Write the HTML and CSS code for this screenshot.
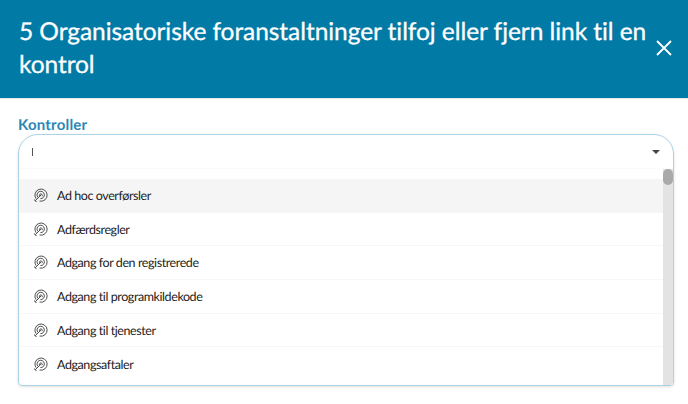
FILE: index.html
```html
<!DOCTYPE html>
<html lang="en">
<head>
    <meta charset="UTF-8">
    <meta name="viewport" content="width=device-width, initial-scale=1.0">
    <title>Kontroller</title>
    <link rel="stylesheet" href="styles.css">
</head>
<body>
    <svg class="icon-defs" width="0" height="0">
        <symbol id="target" viewBox="0 0 16 16">
            <path d="M3.3 11.4A6.5 6.5 0 1 1 7 13.9" />
            <path d="M5.3 10A3.9 3.9 0 1 1 7.9 11.3" />
            <path d="M7.3 8.8A1.5 1.5 0 1 1 9.6 8.7" />
            <path d="M8.5 7.5L2.4 13.6M1.6 12.2L2.2 13.8L3.8 14.4" />
        </symbol>
    </svg>
    <div class="modal">
        <div class="modal-header">
            <h1>5 Organisatoriske foranstaltninger tilfoj eller fjern link til en kontrol</h1>
            <button class="close-btn" aria-label="Luk">
                <svg width="16" height="16" viewBox="0 0 16 16"><path d="M1 1L15 15M15 1L1 15" /></svg>
            </button>
        </div>
        <div class="modal-body">
            <label class="field-label">Kontroller</label>
            <div class="combo">
                <div class="combo-input">
                    <span class="caret"></span>
                    <span class="arrow"></span>
                </div>
                <div class="dropdown">
                    <ul class="options">
                        <li class="active"><svg class="target"><use href="#target" /></svg>Ad hoc overførsler</li>
                        <li><svg class="target"><use href="#target" /></svg>Adfærdsregler</li>
                        <li><svg class="target"><use href="#target" /></svg>Adgang for den registrerede</li>
                        <li><svg class="target"><use href="#target" /></svg>Adgang til programkildekode</li>
                        <li><svg class="target"><use href="#target" /></svg>Adgang til tjenester</li>
                        <li><svg class="target"><use href="#target" /></svg>Adgangsaftaler</li>
                    </ul>
                    <div class="scroll-track"><div class="scroll-thumb"></div></div>
                </div>
            </div>
        </div>
    </div>
</body>
</html>
```
FILE: styles.css
```css
html, body {
    margin: 0;
    height: 100%;
    overflow: hidden;
    background: #fff;
}

body {
    color: #222;
    font-family: 'Lato', sans-serif;
    text-rendering: geometricPrecision;
}

.icon-defs {
    display: block;
}

.modal-header {
    display: flex;
    justify-content: space-between;
    align-items: center;
    height: 99px;
    box-sizing: border-box;
    padding: 0 16px 0 19px;
    background: #017aa6;
    border-bottom: 1px solid #e6e9eb;
    color: #fff;
}

.modal-header h1 {
    margin: 0 0 2px;
    max-width: 632px;
    font-size: 24.5px;
    font-weight: 400;
    line-height: 33px;
    letter-spacing: -0.06px;
    -webkit-text-stroke: 0.3px #fff;
}

.close-btn {
    display: flex;
    padding: 0;
    border: none;
    background: none;
    margin-top: -3px;
}

.close-btn path {
    stroke: #fff;
    stroke-width: 1.8;
    fill: none;
}

.modal-body {
    padding: 17px 14px 0 18px;
}

.field-label {
    display: block;
    color: #2c86b4;
    font-size: 15px;
    font-weight: 700;
    line-height: 18px;
    letter-spacing: 0.2px;
}

.combo {
    height: 252px;
    box-sizing: border-box;
    display: flex;
    flex-direction: column;
    border: 1px solid #a9d4e5;
    border-radius: 20px 20px 4px 4px;
    box-shadow: 0 1px 3px rgba(0, 0, 0, 0.12);
    overflow: hidden;
}

.combo-input {
    display: flex;
    flex: none;
    justify-content: space-between;
    align-items: center;
    height: 33px;
    padding: 0 13px 0 13px;
    border-bottom: 1px solid #fafafa;
}

.caret {
    width: 1px;
    height: 8px;
    background: #555;
}

.arrow {
    width: 0;
    height: 0;
    border-left: 4px solid transparent;
    border-right: 4px solid transparent;
    border-top: 4px solid #444;
}

.dropdown {
    display: flex;
    flex: 1;
    min-height: 0;
}

.options {
    flex: 1;
    margin: 0;
    padding: 10px 0 0;
    list-style: none;
    font-size: 12.5px;
    letter-spacing: -0.42px;
}

.options li {
    display: flex;
    align-items: center;
    gap: 9px;
    height: 33.7px;
    box-sizing: border-box;
    padding-left: 14px;
    border-bottom: 1px solid #f7f7f7;
}

.options li.active {
    background: #f5f5f5;
}

.options li:last-child {
    border-bottom: none;
}

.target {
    width: 15px;
    height: 15px;
    fill: none;
    stroke: #444;
    stroke-width: 1;
}

.scroll-track {
    flex: none;
    width: 10px;
    background: #e3e3e3;
}

.scroll-thumb {
    height: 16px;
    background: #a9a9a9;
    border-radius: 5px;
}
```
